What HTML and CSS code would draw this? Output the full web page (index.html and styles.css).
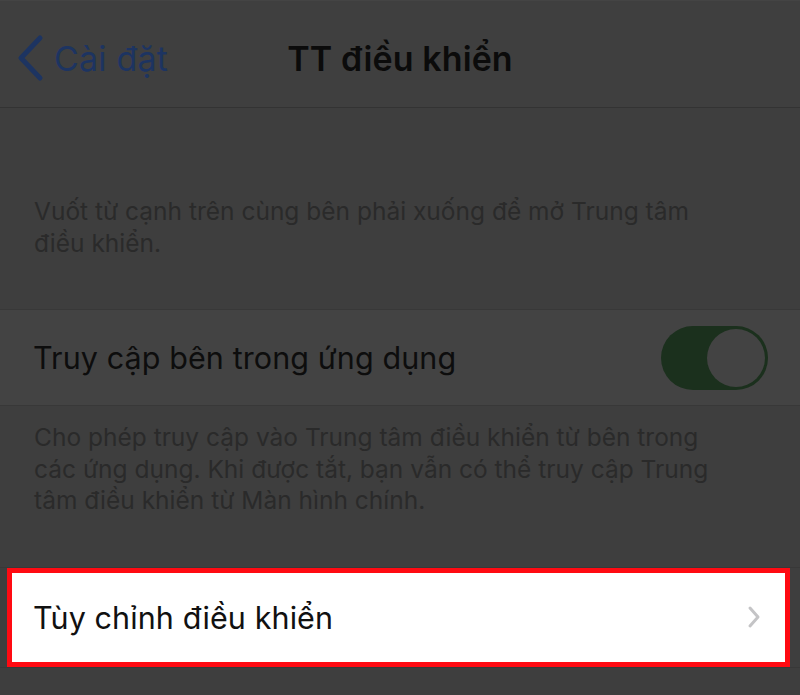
FILE: index.html
```html
<!DOCTYPE html>
<html lang="vi">
<head>
<meta charset="utf-8">
<link rel="stylesheet" href="styles.css">
</head>
<body>
<div class="screen">
  <header class="nav">
    <div class="back">
      <svg class="back-icon" width="30" height="48" viewBox="0 0 30 48"><path d="M25 4 L6 24 L25 44" fill="none" stroke="#1d3461" stroke-width="5" stroke-linecap="round" stroke-linejoin="round"/></svg>
      <span class="back-label">Cài đặt</span>
    </div>
    <div class="title">TT điều khiển</div>
    <div></div>
  </header>
  <p class="note note-top">Vuốt từ cạnh trên cùng bên phải xuống để mở Trung tâm điều khiển.</p>
  <div class="row row-toggle">
    <span class="row-label">Truy cập bên trong ứng dụng</span>
    <span class="toggle"><span class="knob"></span></span>
  </div>
  <p class="note note-mid">Cho phép truy cập vào Trung tâm điều khiển từ bên trong các ứng dụng. Khi được tắt, bạn vẫn có thể truy cập Trung tâm điều khiển từ Màn hình chính.</p>
  <div class="row-wrap">
    <div class="row row-link">
      <span class="row-label">Tùy chỉnh điều khiển</span>
      <svg class="chev" width="14" height="24" viewBox="0 0 14 24"><path d="M3 3 L11 12 L3 21" fill="none" stroke="#c4c4c6" stroke-width="3" stroke-linecap="round" stroke-linejoin="round"/></svg>
    </div>
  </div>
</div>
</body>
</html>
```
FILE: styles.css
```css
html, body {
  margin: 0;
  padding: 0;
}
body {
  background: #3e3e3e;
  font-family: Inter, "Noto Sans", "Liberation Sans", sans-serif;
  width: 800px;
  height: 695px;
  overflow: hidden;
}
.screen {
  display: flex;
  flex-direction: column;
}
.nav {
  border-top: 1px solid #444;
  border-bottom: 1px solid #333;
  background: #3f3f3f;
  display: grid;
  grid-template-columns: 1fr auto 1fr;
  align-items: center;
  padding-top: 8px;
  box-sizing: border-box;
  height: 108px;
}
.back {
  display: flex;
  align-items: center;
  padding-left: 15px;
  gap: 9px;
}
.back-label {
  color: #1d3461;
  font-size: 34px;
  letter-spacing: 0.2px;
}
.title {
  color: #0b0b0b;
  font-size: 34px;
  font-weight: 600;
  letter-spacing: 0.1px;
}
.note {
  margin: 0;
  color: #2a2a2a;
  font-size: 24.5px;
  line-height: 31.5px;
  padding: 0 58px 0 34px;
}
.note-top {
  padding-top: 88px;
  padding-bottom: 50px;
}
.note-mid {
  padding-top: 16px;
  padding-bottom: 50px;
}
.row {
  display: flex;
  align-items: center;
  justify-content: space-between;
  padding: 0 33px;
}
.row-label {
  font-size: 30.5px;
  color: #0d0d0d;
  letter-spacing: 0.1px;
}
.row-toggle {
  height: 95px;
  background: #434343;
  border-top: 1px solid #383838;
  border-bottom: 1px solid #383838;
  padding-right: 32px;
}
.toggle {
  width: 107px;
  height: 64px;
  border-radius: 32px;
  background: #1b301d;
  display: flex;
  align-items: center;
  justify-content: flex-end;
  padding-right: 3px;
  box-sizing: border-box;
}
.knob {
  width: 58px;
  height: 58px;
  border-radius: 50%;
  background: #434343;
}
.row-wrap {
  border-top: 1px solid #383838;
  border-bottom: 1px solid #383838;
  padding: 0 10px 0 7px;
}
.row-link {
  height: 89px;
  background: #fff;
  border: 5px solid #ff0a12;
  padding: 0 24px 0 21px;
}
.row-link .row-label {
  color: #111;
}
.chev {
  display: block;
}
```
